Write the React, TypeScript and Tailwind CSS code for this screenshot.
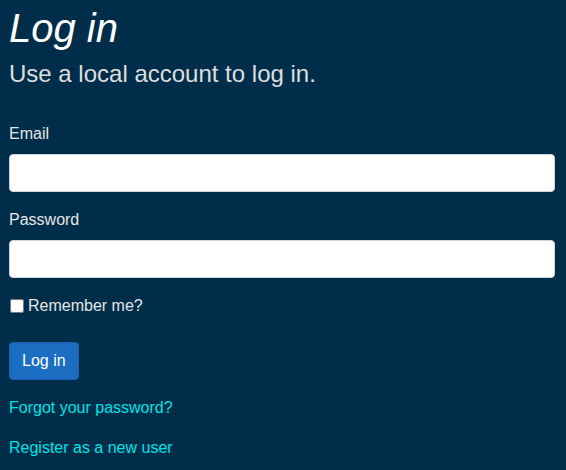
export default function App() {
  return (
    <div className="min-h-[470px] bg-[#002e4a] px-[9px] pr-[11px] pt-[4px] font-['Liberation_Sans',Arial,sans-serif] text-[#e6e6e6]">
      <h1 className="text-[40px] italic leading-[1.2] text-white">Log in</h1>
      <h2 className="mt-[8px] text-[24px] leading-[1.2] text-[#dedede]">Use a local account to log in.</h2>
      <form className="mt-[33px]" onSubmit={e => e.preventDefault()}>
        <div className="mb-[16px]">
          <label className="mb-[8px] block text-[16px] leading-[24px]">Email</label>
          <input
            type="email"
            className="block h-[38px] w-full rounded-[4px] border border-[#ced4da] bg-white px-3 text-[16px] text-[#495057] outline-none"
          />
        </div>
        <div className="mb-[16px]">
          <label className="mb-[8px] block text-[16px] leading-[24px]">Password</label>
          <input
            type="password"
            className="block h-[38px] w-full rounded-[4px] border border-[#ced4da] bg-white px-3 text-[16px] text-[#495057] outline-none"
          />
        </div>
        <div className="mb-[24px] flex items-center">
          <input type="checkbox" className="m-0 ml-[1px] h-[14px] w-[14px]" />
          <label className="ml-[4px] text-[16px] leading-[24px]">Remember me?</label>
        </div>
        <div className="mb-[16px]">
          <button
            type="submit"
            className="h-[38px] rounded-[4px] border border-[#1861ac] bg-[#1b6ec2] px-[12px] text-[16px] text-white"
          >
            Log in
          </button>
        </div>
        <div className="flex flex-col gap-[16px]">
          <p className="text-[16px] leading-[24px]">
            <a href="#" className="text-[#00e2e6]">Forgot your password?</a>
          </p>
          <p className="text-[16px] leading-[24px]">
            <a href="#" className="text-[#00e2e6]">Register as a new user</a>
          </p>
        </div>
      </form>
    </div>
  );
}
